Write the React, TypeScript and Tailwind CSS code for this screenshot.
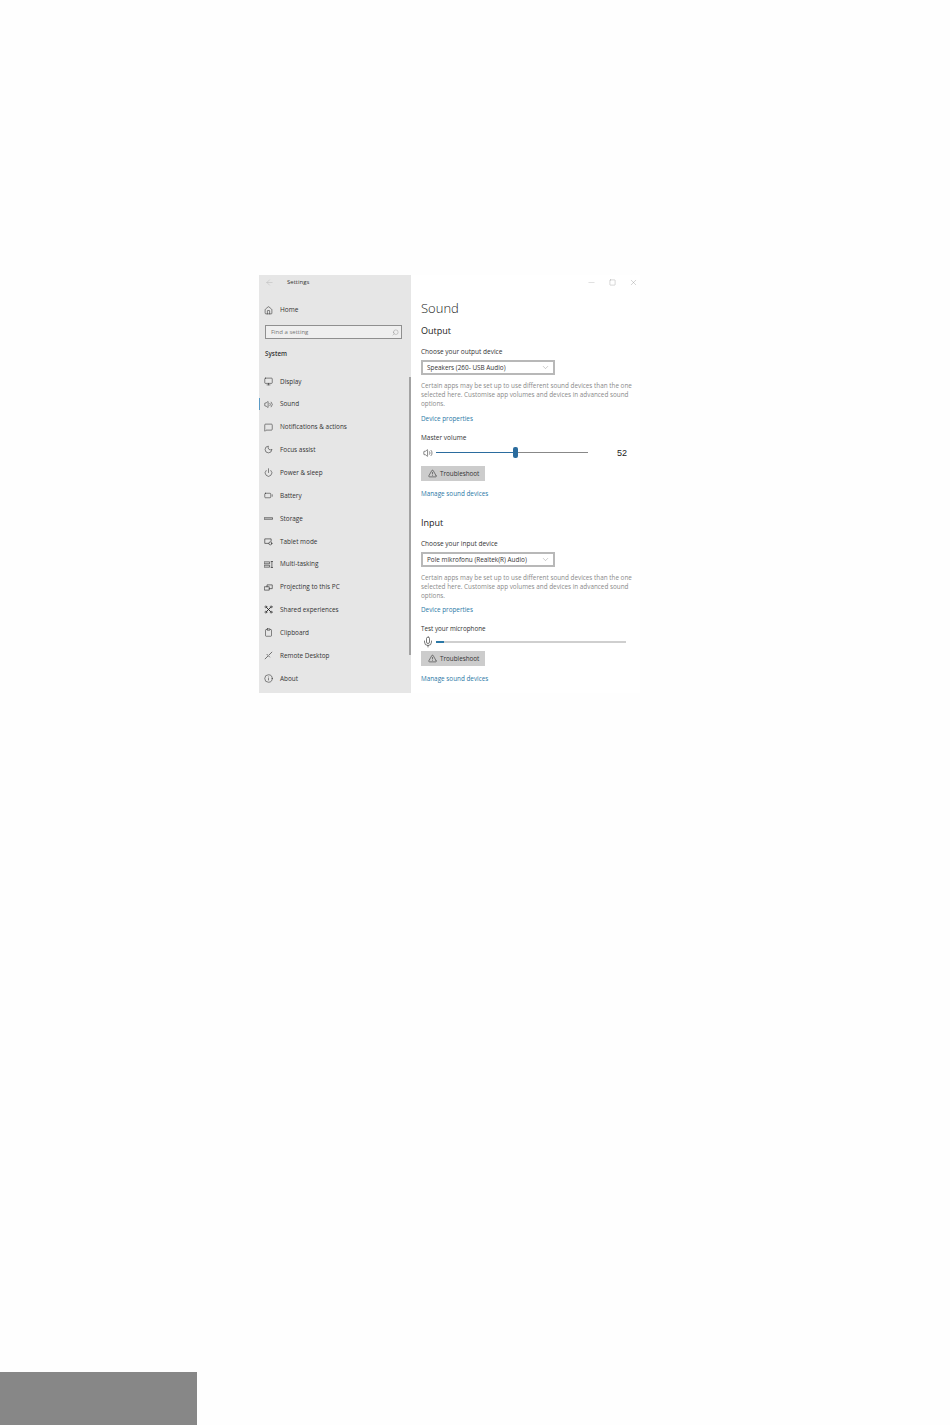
import { AlertTriangle, ArrowLeft, Battery, ChevronDown, Clipboard, Home, Info, Mic, Minus, Monitor, MessageSquare, Moon, Power, Search, Square, Volume2, X } from 'lucide-react'
import type { ReactNode } from 'react'

const ic = { size: 9, strokeWidth: 1.400, className: 'text-[#222]' }

function Glyph({ children }: { children: ReactNode }) {
  return (
    <svg width="9" height="9" viewBox="0 0 24 24" fill="none" stroke="#222" strokeWidth="1.600" strokeLinecap="round" strokeLinejoin="round">
      {children}
    </svg>
  )
}

const navItems: { label: string; icon: ReactNode; active?: boolean }[] = [
  { label: 'Display', icon: <Monitor {...ic} /> },
  { label: 'Sound', icon: <Volume2 {...ic} />, active: true },
  { label: 'Notifications & actions', icon: <MessageSquare {...ic} /> },
  { label: 'Focus assist', icon: <Moon {...ic} /> },
  { label: 'Power & sleep', icon: <Power {...ic} /> },
  { label: 'Battery', icon: <Battery {...ic} /> },
  { label: 'Storage', icon: <Glyph><rect x="1" y="10" width="22" height="4" /></Glyph> },
  { label: 'Tablet mode', icon: <Glyph><path d="M12 17H2V5h17v6" /><circle cx="17" cy="17" r="4" /></Glyph> },
  { label: 'Multi-tasking', icon: <Glyph><rect x="1" y="5" width="14" height="5" /><rect x="1" y="14" width="14" height="5" /><path d="M19 4h4M19 20h4M21 4v16" /></Glyph> },
  { label: 'Projecting to this PC', icon: <Glyph><path d="M8 10V5h14v10h-8" /><rect x="2" y="10" width="12" height="9" /></Glyph> },
  { label: 'Shared experiences', icon: <Glyph><path d="M7 7l10 10M17 7L7 17" strokeWidth="2.400" /><circle cx="5" cy="5" r="2.500" /><circle cx="19" cy="5" r="2.500" /><circle cx="5" cy="19" r="2.500" /><circle cx="19" cy="19" r="2.500" /></Glyph> },
  { label: 'Clipboard', icon: <Clipboard {...ic} /> },
  { label: 'Remote Desktop', icon: <Glyph><path d="M3 21l7-7M14 10l7-7M8 9l7 7" /></Glyph> },
  { label: 'About', icon: <Info {...ic} /> },
]

function Link({ children }: { children: ReactNode }) {
  return <p className="text-[6.350px] leading-[10px] font-medium text-[#2b78a6]">{children}</p>
}

function Description() {
  return (
    <p className="w-[215px] text-[6.350px] leading-[9px] text-[#8a8a8a]">
      Certain apps may be set up to use different sound devices than the one selected here. Customise app volumes and devices in advanced sound options.
    </p>
  )
}

function Dropdown({ label }: { label: string }) {
  return (
    <div className="w-[134px] h-[15px] border-2 border-[#b8b8b8] bg-white flex items-center justify-between pl-1 pr-[3px]">
      <span className="text-[6.400px] text-[#333] whitespace-nowrap">{label}</span>
      <ChevronDown size={9} strokeWidth={1} className="text-[#777]" />
    </div>
  )
}

function Troubleshoot() {
  return (
    <div className="w-[64px] h-[15px] bg-[#cccccc] flex items-center pl-[7px] gap-[3px]">
      <AlertTriangle size={9} strokeWidth={1.400} className="text-[#222]" />
      <span className="text-[6.300px] text-[#333]">Troubleshoot</span>
    </div>
  )
}

export default function App() {
  return (
    <div className="w-[950px] h-[1425px] bg-[#fefefe] flex flex-col justify-between font-['Open_Sans',sans-serif]">
      <div className="relative ml-[259px] mt-[275px] w-[381px] h-[418px] flex bg-white">
        {/* Sidebar */}
        <aside className="relative w-[152px] bg-[#e6e6e6] flex flex-col">
          <div className="h-[14px] flex items-center pl-[6px]">
            <ArrowLeft size={9} strokeWidth={1} className="text-[#aaa]" />
            <span className="ml-[13px] mt-[1px] text-[6px] text-[#333]">Settings</span>
          </div>
          <div className="mt-[14px] h-[14px] flex items-center pl-[5px] gap-[7px]">
            <Home {...ic} />
            <span className="text-[6.500px] text-[#333]">Home</span>
          </div>
          <div className="mt-[8px] ml-[6px] w-[137px] h-[14px] border border-[#8f8f8f] bg-[#efefef] flex items-center justify-between pl-[5px] pr-[2px]">
            <span className="text-[6px] text-[#777]">Find a setting</span>
            <Search size={7} strokeWidth={1} className="text-[#666] -scale-x-100" />
          </div>
          <p className="mt-[10px] pl-[6px] text-[6.300px] leading-[10px] font-semibold text-[#333]">System</p>
          <nav className="mt-[11px] flex flex-col">
            {navItems.map((item) => (
              <div key={item.label} className="relative h-[22.850px] flex items-center pl-[5px] gap-[7px]">
                {item.active && <span className="absolute left-0 top-[5px] w-[1px] h-[12px] bg-[#5a9ac5]" />}
                {item.icon}
                <span className="text-[6.400px] text-[#333] whitespace-nowrap">{item.label}</span>
              </div>
            ))}
          </nav>
          <div className="absolute right-[0px] top-[102px] w-[2px] h-[278px] bg-[#a3a3a3]" />
        </aside>

        {/* Content */}
        <main className="flex-1 pl-[10px] flex flex-col">
          <div className="h-[14px] flex items-center justify-end gap-[13px] pr-[2px]">
            <Minus size={9} strokeWidth={0.800} className="text-[#999]" />
            <Square size={7} strokeWidth={1} className="text-[#777]" />
            <X size={9} strokeWidth={0.800} className="text-[#777]" />
          </div>
          <h1 className="mt-[10px] text-[13px] leading-[18px] font-light text-[#222]">Sound</h1>
          <h2 className="mt-[8px] text-[9px] leading-[12px] text-[#222]">Output</h2>
          <p className="mt-[10px] text-[6.500px] leading-[9px] text-[#333]">Choose your output device</p>
          <div className="mt-[4px]"><Dropdown label="Speakers (260- USB Audio)" /></div>
          <div className="mt-[6px]"><Description /></div>
          <div className="mt-[6px]"><Link>Device properties</Link></div>
          <p className="mt-[9px] text-[6.500px] leading-[9px] text-[#333]">Master volume</p>
          <div className="mt-[4px] h-[13px] flex items-center">
            <Volume2 size={10} strokeWidth={1.300} className="ml-[2px] text-[#222]" />
            <div className="relative ml-[3px] w-[152px] h-[1px] bg-[#888]">
              <div className="h-full w-[79px] bg-[#2b6c9e]" />
              <div className="absolute left-[77px] -top-[5px] w-[5px] h-[11px] rounded-[2px] bg-[#2b6c9e]" />
            </div>
            <span className="ml-[29px] mt-[3px] text-[9px] font-['Liberation_Sans',sans-serif] text-[#222]">52</span>
          </div>
          <div className="mt-[7px]"><Troubleshoot /></div>
          <div className="mt-[8px]"><Link>Manage sound devices</Link></div>
          <h2 className="mt-[18px] text-[9px] leading-[12px] text-[#222]">Input</h2>
          <p className="mt-[10px] text-[6.500px] leading-[9px] text-[#333]">Choose your input device</p>
          <div className="mt-[4px]"><Dropdown label="Pole mikrofonu (Realtek(R) Audio)" /></div>
          <div className="mt-[6px]"><Description /></div>
          <div className="mt-[5px]"><Link>Device properties</Link></div>
          <p className="mt-[9px] text-[6.300px] leading-[9px] text-[#333]">Test your microphone</p>
          <div className="mt-[2px] h-[13px] flex items-center">
            <Mic size={12} strokeWidth={1.200} className="ml-[1px] text-[#222]" />
            <div className="ml-[2px] w-[190px] h-[2px] bg-[#cfcfcf]">
              <div className="h-full w-[8px] bg-[#2b78a6]" />
            </div>
          </div>
          <div className="mt-[3px]"><Troubleshoot /></div>
          <div className="mt-[8px]"><Link>Manage sound devices</Link></div>
        </main>
      </div>

      {/* Footer block */}
      <div className="w-[197px] h-[53px] bg-[#878787]" />
    </div>
  )
}
